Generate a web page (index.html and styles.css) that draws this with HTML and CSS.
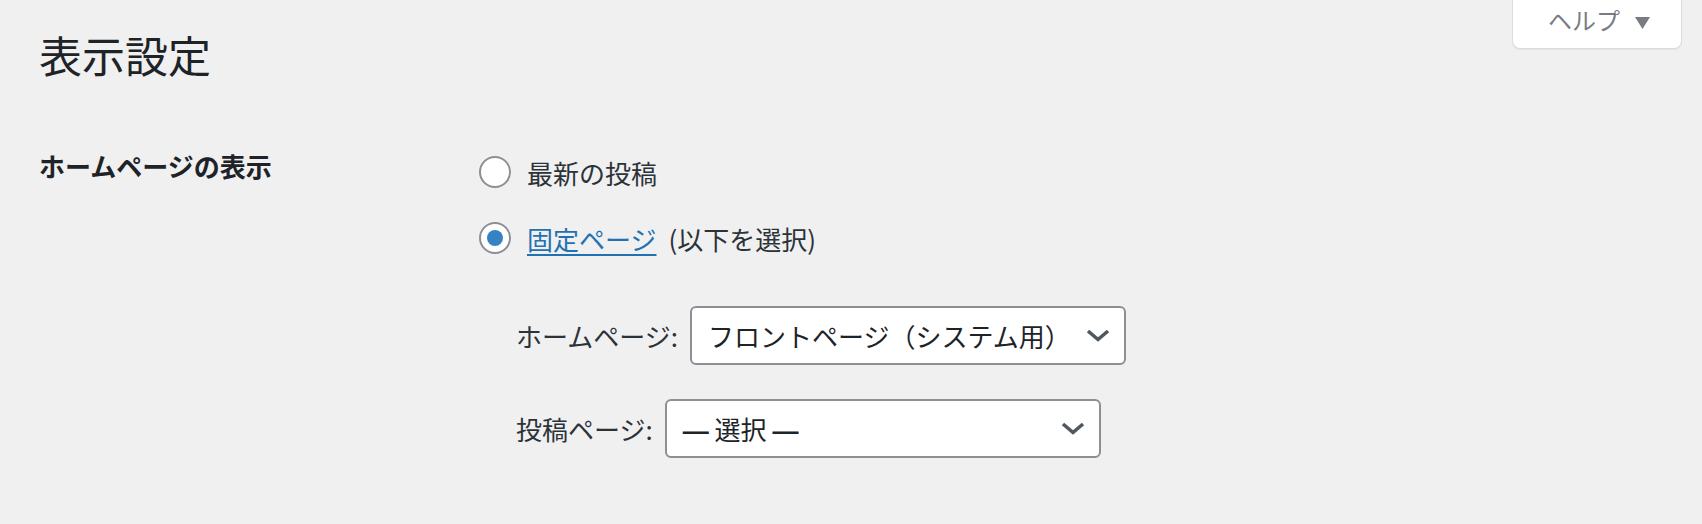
FILE: index.html
```html
<!DOCTYPE html>
<html lang="ja">
<head>
<meta charset="utf-8">
<title>表示設定</title>
<link rel="stylesheet" href="styles.css">
</head>
<body>
<div class="wrap">
  <header class="page-head">
    <h1 class="page-title">表示設定</h1>
    <button class="help-tab" type="button">
      <span class="help-text">ヘルプ</span>
      <svg class="help-arrow" width="15" height="12" viewBox="0 0 15 12"><polygon points="0,0 15,0 7.5,12" fill="#787c82"/></svg>
    </button>
  </header>

  <div class="form-row">
    <div class="form-th">ホームページの表示</div>
    <div class="form-td">
      <label class="radio-row first">
        <span class="radio"></span>
        <span class="radio-text">最新の投稿</span>
      </label>
      <label class="radio-row second">
        <span class="radio checked"><span class="radio-dot"></span></span>
        <span class="radio-text"><a class="link" href="#">固定ページ</a><span class="radio-note">(以下を選択)</span></span>
      </label>
      <div class="select-row first-select">
        <span class="select-label">ホームページ:</span>
        <div class="select">
          <span class="select-value">フロントページ（システム用）</span>
          <svg class="chevron" width="24" height="13" viewBox="0 0 24 13"><path d="M2 2 L12 10.5 L22 2" fill="none" stroke="#50575e" stroke-width="3.6"/></svg>
        </div>
      </div>
      <div class="select-row second-select">
        <span class="select-label">投稿ページ:</span>
        <div class="select">
          <span class="select-value"><span class="dash">—</span> 選択 <span class="dash">—</span></span>
          <svg class="chevron" width="24" height="13" viewBox="0 0 24 13"><path d="M2 2 L12 10.5 L22 2" fill="none" stroke="#50575e" stroke-width="3.6"/></svg>
        </div>
      </div>
    </div>
  </div>
</div>
</body>
</html>
```

FILE: styles.css
```css
* { box-sizing: border-box; }

html, body {
  margin: 0;
  padding: 0;
  background: #f0f0f1;
}

body {
  font-family: "Noto Sans CJK JP", "Noto Sans", sans-serif;
  color: #2c3338;
  width: 1702px;
  height: 524px;
  overflow: hidden;
}

.wrap {
  padding: 0 20px 0 39px;
}

.page-head {
  display: flex;
  justify-content: space-between;
  align-items: flex-start;
  height: 82px;
}

.page-title {
  margin: 26px 0 0 0;
  font-size: 43px;
  line-height: 56px;
  font-weight: 400;
  color: #1d2327;
}

.help-tab {
  display: flex;
  align-items: center;
  width: 170px;
  height: 49px;
  padding: 0 0 8px 35px;
  margin: 0;
  background: #fff;
  border: 1px solid #dcdcde;
  border-top: none;
  border-radius: 0 0 8px 8px;
  box-shadow: 0 1px 1px rgba(0, 0, 0, 0.06);
  font-family: inherit;
  cursor: pointer;
}

.help-text {
  font-size: 24px;
  line-height: 30px;
  color: #787c82;
}

.help-arrow {
  margin-left: 15px;
  margin-top: 5px;
}

.form-row {
  display: flex;
  padding-top: 66px;
}

.form-th {
  width: 440px;
  flex: none;
  font-size: 26px;
  line-height: 36px;
  font-weight: 700;
  color: #1d2327;
}

.form-td {
  display: flex;
  flex-direction: column;
  align-items: flex-start;
}

.radio-row {
  display: flex;
  align-items: center;
  height: 44px;
  font-size: 26px;
  color: #2c3338;
}

.radio-row.first { margin-top: 2px; }
.radio-row.second { margin-top: 22px; }

.radio {
  width: 32px;
  height: 32px;
  border: 2px solid #8c8f94;
  border-radius: 50%;
  background: #fff;
  margin-right: 16px;
  display: flex;
  align-items: center;
  justify-content: center;
  flex: none;
}

.radio-dot {
  width: 16px;
  height: 16px;
  border-radius: 50%;
  background: #3582c4;
}

.link {
  color: #2271b1;
  text-decoration: underline;
  text-underline-offset: 4px;
  text-decoration-thickness: 2px;
}

.radio-note {
  margin-left: 12px;
}

.select-row {
  display: flex;
  align-items: center;
  padding-left: 37px;
  font-size: 26px;
}

.select-row.first-select { margin-top: 46px; }
.select-row.second-select { margin-top: 34px; }

.select-label {
  color: #2c3338;
  margin-right: 12px;
}

.select {
  display: flex;
  align-items: center;
  justify-content: space-between;
  width: 436px;
  height: 59px;
  border: 2px solid #8c8f94;
  border-radius: 6px;
  background: #fff;
  padding: 0 14px 0 16px;
  color: #1d2327;
}

.dash {
  font-family: "Liberation Sans", sans-serif;
  font-weight: 700;
  color: #1d2327;
}

.chevron { flex: none; }
```
